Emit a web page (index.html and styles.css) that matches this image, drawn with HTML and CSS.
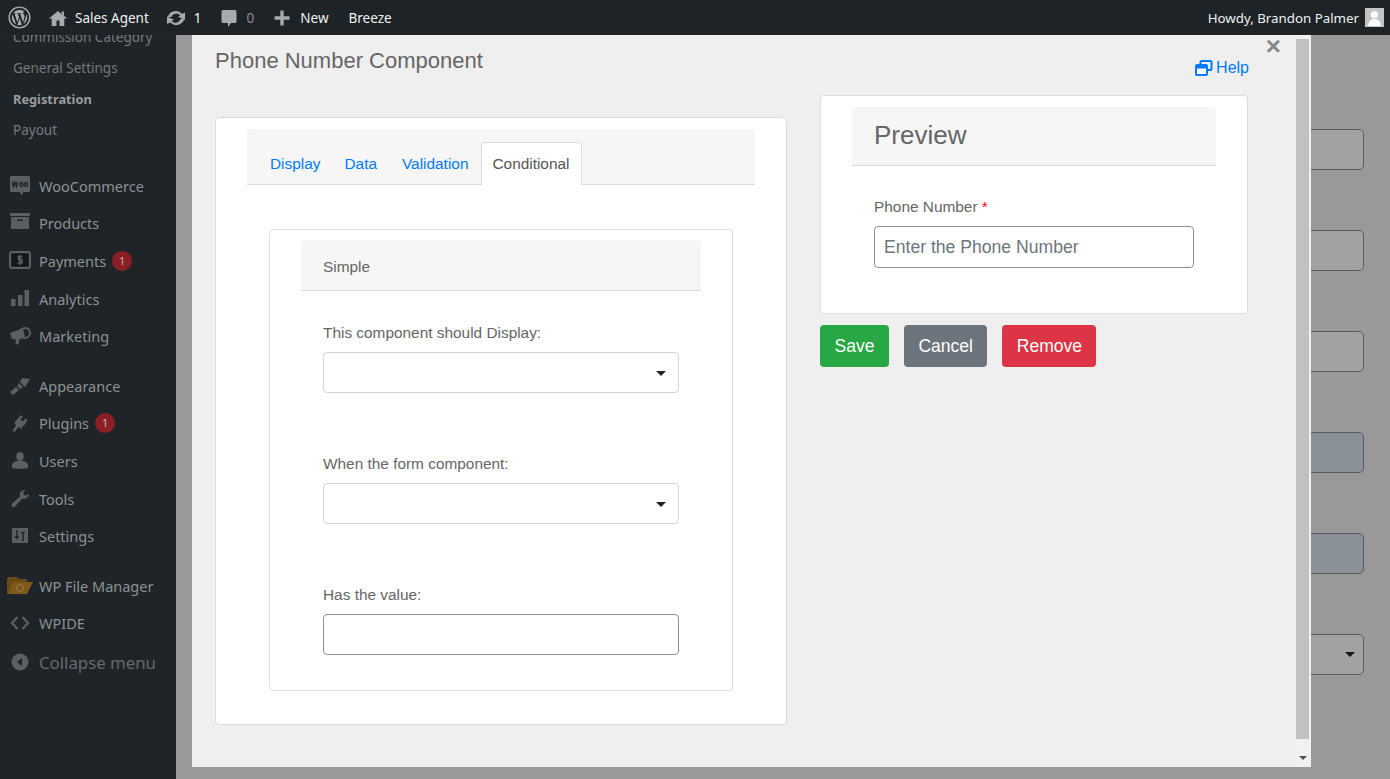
FILE: index.html
```html
<!DOCTYPE html>
<html lang="en">
<head>
    <meta charset="UTF-8">
    <title>Phone Number Component</title>
    <link rel="stylesheet" href="styles.css">
</head>
<body>
    <!-- top admin bar -->
    <header class="adminbar">
        <div class="bar-group">
            <svg class="wp-logo" viewBox="0 0 24 24"><circle cx="12" cy="12" r="10.8" fill="none" stroke="#a7aaad" stroke-width="1.5"/><path fill="#a7aaad" d="M4 12c0 3.200 1.900 6 4.600 7.300L4.800 8.800A8 8 0 0 0 4 12zm13.400-.4c0-1-.4-1.700-.7-2.200-.4-.7-.8-1.200-.8-1.900 0-.7.600-1.400 1.300-1.400h.1A8 8 0 0 0 5.200 7.700h.5c.8 0 2.100-.1 2.100-.1.400 0 .5.600 0 .7 0 0-.4 0-.9.100l2.900 8.600 1.700-5.200-1.200-3.400-.8-.1c-.4 0-.4-.7 0-.7 0 0 1.300.1 2.100.1s2.100-.1 2.100-.1c.4 0 .5.600 0 .7 0 0-.4 0-.9.100l2.900 8.500.8-2.700c.4-1.100.7-1.900.7-2.600zM12.100 12.700l-2.400 7a8 8 0 0 0 4.900-.1l-.1-.1zM19 8.200c0 .3.100.5.100.9 0 .8-.2 1.700-.6 2.900l-2.400 7A8 8 0 0 0 19 8.200z"/></svg>
            <span class="bar-item home"><svg class="bar-icon" viewBox="0 0 20 20"><path fill="#a7aaad" d="M16 8.500 10 3 .8 10.500h2.900V18h4.800v-5.500h3V18h4.800v-7.500h2.900L16 7.700V3.500h-2.500v2z"/></svg><span class="bar-text">Sales Agent</span></span>
            <span class="bar-item"><svg class="bar-icon" viewBox="0 0 20 20"><path fill="#a7aaad" d="M10 3c2.400 0 4.500 1.200 5.800 3L19 4.500V12l-7-3.200 2.300-1.200A5.200 5.200 0 0 0 5.300 9H1.700A8.500 8.500 0 0 1 10 3zM1 16V8.500l7 3.200-2.300 1.200A5.200 5.200 0 0 0 14.700 11h3.600A8.500 8.500 0 0 1 4.200 14.500z"/></svg><span class="bar-text">1</span></span>
            <span class="bar-item comments"><svg class="bar-icon" viewBox="0 0 20 20"><path fill="#a7aaad" d="M4 2h12a1.500 1.500 0 0 1 1.500 1.500v10A1.500 1.500 0 0 1 16 15h-4l-3 4v-4H4a1.500 1.500 0 0 1-1.500-1.500v-10A1.500 1.500 0 0 1 4 2z"/></svg><span class="bar-text muted">0</span></span>
            <span class="bar-item new"><svg class="bar-icon" viewBox="0 0 20 20"><path fill="#a7aaad" d="M8.300 2.500h3.400v5.800h5.800v3.400h-5.800v5.800H8.300v-5.800H2.500V8.300h5.800z"/></svg><span class="bar-text">New</span></span>
            <span class="bar-item"><span class="bar-text">Breeze</span></span>
        </div>
        <div class="bar-user">
            <span>Howdy, Brandon Palmer</span>
            <svg class="avatar" viewBox="0 0 18 18"><rect width="18" height="18" fill="#c4c4c4"/><circle cx="9" cy="6.500" r="3.400" fill="#fff"/><path fill="#fff" d="M3 17c.3-4.500 2.600-6.500 6-6.500s5.700 2 6 6.500z"/></svg>
        </div>
    </header>

    <div class="layout">
        <!-- left menu -->
        <aside class="sidebar">
            <ul class="submenu">
                <li class="cut">Commission Category</li>
                <li>General Settings</li>
                <li class="current">Registration</li>
                <li>Payout</li>
            </ul>
            <ul class="menu">
                <li><svg class="menu-icon" viewBox="0 0 22 22"><path fill="#5c5f62" d="M2.500 1h17A1.500 1.500 0 0 1 21 2.500v13a1.500 1.500 0 0 1-1.500 1.500H14l-1 3.500-2.500-3.500h-8A1.500 1.500 0 0 1 1 15.500v-13A1.500 1.500 0 0 1 2.500 1z"/><path fill="none" stroke="#1f2428" stroke-width="1.400" d="M3.500 6.500l1 5 1.500-4 1.500 4 1-5M12.500 7.500a1.500 2 0 1 0 .01 0M17 7.500a1.500 2 0 1 0 .01 0"/></svg>WooCommerce</li>
                <li><svg class="menu-icon" viewBox="0 0 22 22"><path fill="#5c5f62" d="M1 1h20v3H1zM2 5h18v12H2z"/><path fill="#1f2428" d="M8 7.500h6V9H8z"/></svg>Products</li>
                <li><svg class="menu-icon" viewBox="0 0 22 22"><rect x="1" y="2" width="20" height="16" rx="2" fill="none" stroke="#5c5f62" stroke-width="2"/><rect x="3" y="4" width="16" height="12" fill="#14171a"/><path fill="none" stroke="#5c5f62" stroke-width="1.600" d="M13.500 6.500h-4v3h3.500v3.500H8.500M11 5v10"/></svg>Payments<span class="count">1</span></li>
                <li><svg class="menu-icon" viewBox="0 0 22 22"><path fill="#5c5f62" d="M2 11h4.500v7H2zM9 7h4.500v11H9zM15.500 2H20v16h-4.500z"/></svg>Analytics</li>
                <li><svg class="menu-icon" viewBox="0 0 22 22"><path fill="#5c5f62" d="M1 8l13-5 2 10-5.500 1-.8 5.500-3.200-.8.600-4L3 14z"/><circle cx="16" cy="8" r="5" fill="none" stroke="#5c5f62" stroke-width="2"/></svg>Marketing</li>
            </ul>
            <ul class="menu">
                <li><svg class="menu-icon" viewBox="0 0 22 22"><path fill="#5c5f62" d="M13 3l8 1-5 8-5-5zM10 8l4 4-3 2-3-3zM7 12l3 3-6 5-3-3z"/></svg>Appearance</li>
                <li><svg class="menu-icon" viewBox="0 0 22 22"><path fill="#5c5f62" d="M12 3l2 1.500-2.500 3 2.500 2 2.500-3 2 1.500-3 5-2 1-1 3-3-2-4 5-2-1.500 3.500-5-1.500-3 1.500-2z"/></svg>Plugins<span class="count">1</span></li>
                <li><svg class="menu-icon" viewBox="0 0 22 22"><ellipse cx="11" cy="6.500" rx="3.800" ry="4.500" fill="#5c5f62"/><path fill="#5c5f62" d="M3 18v-3c0-2 3-3.500 5-4h6c2 .5 5 2 5 4v3c-2 1-14 1-16 0z"/></svg>Users</li>
                <li><svg class="menu-icon" viewBox="0 0 22 22"><path fill="#5c5f62" d="M20 5.500a5 5 0 0 1-6.700 5L6 18.500a2 2 0 0 1-3-2.700l8-7.300A5 5 0 0 1 16.500 2l-2.500 3 1.500 2.500 2.500-.5z"/></svg>Tools</li>
                <li><svg class="menu-icon" viewBox="0 0 22 22"><rect x="3" y="3" width="16" height="15" fill="#5c5f62"/><path fill="none" stroke="#1f2428" stroke-width="1.500" d="M8 5v9M5.500 12H10M14 8v8M11.500 7.500H16"/></svg>Settings</li>
            </ul>
            <ul class="menu">
                <li><svg class="menu-icon wide" viewBox="0 0 26 18"><path fill="#6b4a16" d="M0 2l1-2h9l2 2h8v3H6L2 17H0z"/><path fill="#80581a" d="M6 5h20l-6 12H1z"/><circle cx="13" cy="11" r="3.500" fill="none" stroke="#9c7c48" stroke-width="1"/></svg>WP File Manager</li>
                <li><svg class="menu-icon" viewBox="0 0 22 22"><path fill="none" stroke="#5c5f62" stroke-width="2.200" d="M8.500 5L3 11l5.500 6M13.500 5L19 11l-5.500 6"/></svg>WPIDE</li>
                <li class="collapse"><svg class="menu-icon" viewBox="0 0 22 22"><circle cx="11" cy="10" r="8.500" fill="#5c5f62"/><path fill="#1f2428" d="M13 6v8l-5-4z"/></svg>Collapse menu</li>
            </ul>
        </aside>

        <!-- settings form behind the overlay -->
        <main class="page">
            <div class="field"></div>
            <div class="field"></div>
            <div class="field"></div>
            <div class="field blue"></div>
            <div class="field blue"></div>
            <div class="field select"></div>
        </main>
    </div>

    <div class="overlay"></div>

    <!-- builder dialog -->
    <div class="dialog">
        <div class="dialog-scroll">
            <span class="close">&times;</span>
            <h2 class="dialog-title">Phone Number Component</h2>
            <a class="help" href="#"><svg class="help-icon" viewBox="0 0 18 16"><rect x="5.500" y="1" width="11" height="9" rx="1" fill="none" stroke="#007bff" stroke-width="2"/><rect x="1" y="5" width="11" height="10" rx="1" fill="#fff" stroke="#007bff" stroke-width="2"/><path fill="#007bff" d="M1 5h11v3.500H1z"/></svg>Help</a>

            <div class="columns">
                <section class="card settings">
                    <div class="card-header tabs">
                        <a href="#">Display</a>
                        <a href="#">Data</a>
                        <a href="#" class="validation">Validation</a>
                        <a href="#" class="active">Conditional</a>
                    </div>
                    <div class="inner-card">
                        <div class="card-header simple">Simple</div>
                        <div class="inner-body">
                            <label>This component should Display:</label>
                            <div class="control choice"></div>
                            <label>When the form component:</label>
                            <div class="control choice"></div>
                            <label>Has the value:</label>
                            <input class="control" type="text">
                        </div>
                    </div>
                </section>

                <div class="right-col">
                    <section class="card preview">
                        <div class="card-header preview-head">Preview</div>
                        <div class="preview-body">
                            <label>Phone Number <span class="req">*</span></label>
                            <input class="control phone" type="text" placeholder="Enter the Phone Number">
                        </div>
                    </section>
                    <div class="actions">
                        <button class="btn green">Save</button>
                        <button class="btn grey">Cancel</button>
                        <button class="btn red">Remove</button>
                    </div>
                </div>
            </div>
        </div>
        <div class="scrollbar">
            <div class="thumb"></div>
            <span class="scroll-arrow"></span>
        </div>
    </div>
</body>
</html>
```

FILE: styles.css
```css
* {
    box-sizing: border-box;
}

html, body {
    height: 100%;
}

body {
    margin: 0;
    height: 779px;
    overflow: hidden;
    font-family: "Noto Sans", Arial, sans-serif;
    background-color: #f1f1f1;
    display: flex;
    flex-direction: column;
}

ul {
    list-style-type: none;
    margin: 0;
    padding: 0;
}

/* admin bar */
.adminbar {
    height: 35px;
    flex-shrink: 0;
    background-color: #1d2327;
    color: #f0f0f1;
    font-size: 13.500px;
    display: flex;
    justify-content: space-between;
    align-items: center;
    padding: 0 6px 0 8px;
    position: relative;
    z-index: 3;
}

.bar-group {
    display: flex;
    align-items: center;
}

.wp-logo {
    width: 23px;
    height: 23px;
    margin-right: 17px;
}

.bar-item {
    display: flex;
    align-items: center;
    margin-right: 17px;
}

.bar-item.comments {
    margin-right: 18px;
}

.bar-item.new {
    margin-right: 20px;
}

.bar-icon {
    width: 20px;
    height: 20px;
    margin-right: 8px;
}

.bar-item.home .bar-icon {
    margin-right: 7px;
}

.bar-text.muted {
    color: #8a8d90;
}

.bar-user {
    display: flex;
    align-items: center;
    gap: 6px;
    font-size: 13.300px;
}

.avatar {
    width: 19px;
    height: 19px;
}

/* side menu */
.layout {
    flex: 1;
    display: flex;
    min-height: 0;
}

.sidebar {
    width: 176px;
    flex-shrink: 0;
    background-color: #1f2428;
    color: #8d9093;
    font-size: 14.500px;
    overflow: hidden;
    position: relative;
    z-index: 2;
}

.submenu {
    margin-top: -13px;
    font-size: 13.500px;
    color: #77797b;
    padding-bottom: 21px;
}

.submenu li {
    height: 31px;
    line-height: 31px;
    padding-left: 13px;
}

.submenu .current {
    font-size: 12.800px;
    font-weight: 700;
    color: #9a9c9e;
}

.menu {
    padding-bottom: 12px;
}

.menu li {
    height: 37.600px;
    display: flex;
    align-items: center;
    padding-left: 9px;
}

.menu-icon {
    width: 22px;
    height: 22px;
    margin-right: 8px;
    flex-shrink: 0;
}

.menu-icon.wide {
    width: 26px;
    height: 18px;
    margin-left: -2px;
    margin-right: 6px;
}

.count {
    width: 20px;
    height: 20px;
    border-radius: 50%;
    background-color: #8a1f25;
    color: #c9b5b6;
    font-size: 11px;
    line-height: 20px;
    text-align: center;
    margin-left: 6px;
}

.menu .collapse {
    height: 41.600px;
    font-size: 16.800px;
    color: #66696c;
}

/* page behind the overlay */
.page {
    flex: 1;
    padding: 94px 26px 0 0;
    display: flex;
    flex-direction: column;
    align-items: flex-end;
    gap: 60px;
}

.field {
    width: 400px;
    height: 41px;
    background-color: #fff;
    border: 1px solid #8c8f94;
    border-radius: 5px;
}

.field.blue {
    background-color: #dbe4f0;
}

.field.select {
    position: relative;
}

.field.select::after {
    content: "";
    position: absolute;
    right: 8px;
    top: 17px;
    border: 5px solid transparent;
    border-top: 5px solid #222;
    border-bottom: 0;
}

.overlay {
    position: absolute;
    top: 0;
    left: 0;
    width: 100%;
    height: 100%;
    background: rgba(0, 0, 0, 0.365);
    z-index: 1;
}

/* dialog */
.dialog {
    position: absolute;
    top: 35px;
    left: 192px;
    width: 1119px;
    height: 732px;
    background-color: #efefef;
    color: #666;
    font-family: "Liberation Sans", Arial, sans-serif;
    z-index: 2;
    display: flex;
}

.dialog-scroll {
    flex: 1;
    position: relative;
    padding: 12px 0 0 23px;
}

.dialog-title {
    margin: 0;
    font-size: 22px;
    font-weight: 400;
    line-height: 27px;
    color: #666;
}

.close {
    position: absolute;
    top: -4px;
    right: 15px;
    font-size: 26px;
    line-height: 30px;
    font-weight: 700;
    color: #888;
}

.help {
    position: absolute;
    top: 24px;
    right: 47px;
    display: flex;
    align-items: center;
    gap: 3px;
    font-size: 16px;
    color: #007bff;
    text-decoration: none;
}

.help-icon {
    width: 18px;
    height: 16px;
}

.columns {
    display: flex;
    align-items: flex-start;
    margin-top: 21px;
    gap: 33px;
}

.card {
    background-color: #fff;
    border: 1px solid #dcdcdc;
    border-radius: 4px;
}

.card-header {
    background-color: #f6f6f6;
    border-bottom: 1px solid #d8d8d8;
    border-radius: 4px 4px 0 0;
}

.settings {
    width: 572px;
    height: 608px;
    margin-top: 22px;
    padding: 11px 31px 0;
}

.tabs {
    height: 56px;
    padding: 13px 0 0 11px;
    display: flex;
    font-size: 15.400px;
}

.tabs a {
    height: 43px;
    line-height: 43px;
    padding: 0 12px;
    color: #007bff;
    text-decoration: none;
}

.tabs a.validation {
    margin-left: 1px;
}

.tabs a.active {
    line-height: 41px;
    color: #555;
    background-color: #fff;
    border: 1px solid #dcdcdc;
    border-bottom: 0;
    border-radius: 4px 4px 0 0;
    margin-left: 1px;
    padding: 0 12px 0 10px;
}

.inner-card {
    width: 464px;
    height: 462px;
    margin: 44px 0 0 22px;
    border: 1px solid #dcdcdc;
    border-radius: 4px;
    padding: 10px 31px 0;
}

.simple {
    height: 51px;
    line-height: 53px;
    padding-left: 22px;
    font-size: 15.400px;
}

.inner-body {
    padding: 33px 22px 0;
}

label {
    display: block;
    font-size: 15.400px;
    line-height: 17px;
}

.control {
    display: block;
    width: 100%;
    height: 41px;
    background-color: #fff;
    border: 1px solid #8c8f94;
    border-radius: 4px;
    margin: 11px 0 62px;
    padding: 0 9px;
    font-family: inherit;
    font-size: 17.600px;
    color: #666;
    position: relative;
}

.control::placeholder {
    color: #6c757d;
    opacity: 1;
}

.control.choice {
    border-color: #ced4da;
}

.control.choice::after {
    content: "";
    position: absolute;
    right: 12px;
    top: 18px;
    border: 5px solid transparent;
    border-top: 5px solid #222;
    border-bottom: 0;
}

.right-col {
    width: 428px;
}

.preview {
    height: 219px;
    padding: 11px 31px 0;
}

.preview-head {
    height: 59px;
    line-height: 56px;
    padding-left: 22px;
    font-size: 26px;
}

.preview-body {
    padding: 32px 22px 0;
}

.req {
    color: #ff0000;
}

.control.phone {
    height: 42px;
    margin: 11px 0 0;
}

.actions {
    display: flex;
    gap: 15px;
    margin-top: 11px;
}

.btn {
    height: 42px;
    padding: 0 14.500px;
    border: none;
    border-radius: 4px;
    color: #fff;
    font-family: inherit;
    font-size: 17.500px;
}

.btn.green {
    background-color: #28a745;
}

.btn.grey {
    background-color: #6c757d;
}

.btn.red {
    width: 94px;
    padding: 0;
    background-color: #dc3545;
}

/* dialog scrollbar */
.scrollbar {
    width: 15px;
    background-color: #f1f1f1;
    position: relative;
    padding: 4px 2px 0 0;
}

.thumb {
    height: 700px;
    background-color: #c1c1c1;
}

.scroll-arrow {
    position: absolute;
    left: 3px;
    bottom: 7px;
    border: 4px solid transparent;
    border-top: 4px solid #505050;
    border-bottom: 0;
}
```
